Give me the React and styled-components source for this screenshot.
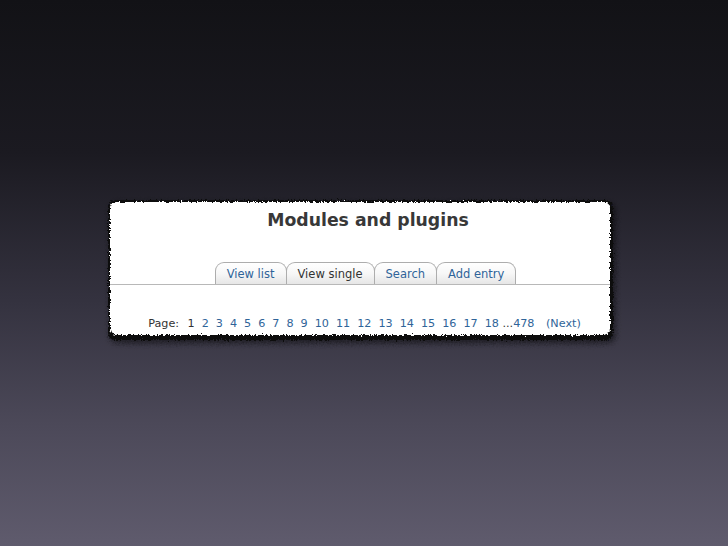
import React from "react";
import styled, { createGlobalStyle } from "styled-components";

const GlobalStyle = createGlobalStyle`
  html, body { margin: 0; padding: 0; }
  body { font-family: "DejaVu Sans", Verdana, sans-serif; }
`;

const Stage = styled.div`
  width: 728px;
  height: 546px;
  box-sizing: border-box;
  padding: 202px 0 0 110px;
  display: flex;
  flex-direction: column;
  align-items: flex-start;
  background: linear-gradient(180deg, #121216 0%, #1b1a21 28%, #34323f 55%, #4c4959 78%, #5f5b6d 100%);
  overflow: hidden;
`;

const Card = styled.div`
  position: relative;
  isolation: isolate;
  width: 500px;
  height: 134px;
  box-sizing: border-box;
  padding-top: 8px;
  display: flex;
  flex-direction: column;

  &::before {
    content: "";
    position: absolute;
    inset: -2px -3px -4px -2px;
    background: #0d0d10;
    border-radius: 7px;
    filter: url(#roughDark);
    box-shadow: 2px 3px 6px rgba(0, 0, 0, 0.55);
    z-index: -2;
  }

  &::after {
    content: "";
    position: absolute;
    inset: 0 0 1px 0;
    background: #ffffff;
    border-radius: 6px;
    filter: url(#rough);
    z-index: -1;
  }
`;

const Title = styled.h1`
  margin: 0;
  padding-left: 16px;
  text-align: center;
  font-family: "DejaVu Sans", Verdana, sans-serif;
  font-weight: bold;
  font-size: 17.3px;
  line-height: 21px;
  color: #383838;
`;

const TabBar = styled.div`
  margin-top: 31px;
  border-bottom: 1px solid #b8b8b8;
  display: flex;
  justify-content: center;
  align-items: flex-end;
  padding-left: 12px;
`;

const Tab = styled.div`
  height: 22px;
  box-sizing: border-box;
  padding: 4px 11px 0;
  margin-left: -1px;
  border: 1px solid #adadad;
  border-bottom: none;
  border-radius: 9px 9px 0 0;
  background: linear-gradient(180deg, #ffffff 0%, #f7f7f7 50%, #e6e6e6 100%);
  font-size: 11.5px;
  line-height: 15px;
  white-space: nowrap;
  color: ${(p) => (p.$active ? "#333333" : "#2f6499")};
`;

const Pager = styled.div`
  margin-top: 32px;
  padding-left: 9px;
  display: flex;
  justify-content: center;
  gap: 7px;
  font-size: 11.2px;
  line-height: 14px;
  color: #333333;
  white-space: nowrap;
`;

const Label = styled.span`
  margin-right: 1.5px;
`;

const PageLink = styled.span`
  color: ${(p) => (p.$current ? "#333333" : "#2f6499")};
`;

const Tail = styled.span`
  margin-left: -3.5px;
`;

const Next = styled.span`
  margin-left: 4.5px;
  color: #2f6499;
`;

const tabs = [
  { label: "View list" },
  { label: "View single", active: true },
  { label: "Search" },
  { label: "Add entry" },
];

const pages = Array.from({ length: 18 }, (_, i) => i + 1);

export default function App() {
  return (
    <>
      <GlobalStyle />
      <svg width="0" height="0" style={{ position: "absolute" }} aria-hidden="true">
        <defs>
          <filter id="rough" x="-5%" y="-10%" width="110%" height="120%">
            <feTurbulence type="fractalNoise" baseFrequency="0.55" numOctaves="3" seed="3" result="n" />
            <feDisplacementMap in="SourceGraphic" in2="n" scale="5" xChannelSelector="R" yChannelSelector="G" />
          </filter>
          <filter id="roughDark" x="-5%" y="-15%" width="110%" height="130%">
            <feTurbulence type="fractalNoise" baseFrequency="0.6" numOctaves="3" seed="7" result="n" />
            <feDisplacementMap in="SourceGraphic" in2="n" scale="5" xChannelSelector="R" yChannelSelector="G" result="d" />
            <feGaussianBlur in="d" stdDeviation="0.5" />
          </filter>
        </defs>
      </svg>
      <Stage>
        <Card>
          <Title>Modules and plugins</Title>
          <TabBar>
            {tabs.map((t) => (
              <Tab key={t.label} $active={t.active}>
                {t.label}
              </Tab>
            ))}
          </TabBar>
          <Pager>
            <Label>Page:</Label>
            {pages.map((n) => (
              <PageLink key={n} $current={n === 1}>
                {n}
              </PageLink>
            ))}
            <Tail>
              ...<PageLink>478</PageLink>
            </Tail>
            <Next>(Next)</Next>
          </Pager>
        </Card>
      </Stage>
    </>
  );
}
